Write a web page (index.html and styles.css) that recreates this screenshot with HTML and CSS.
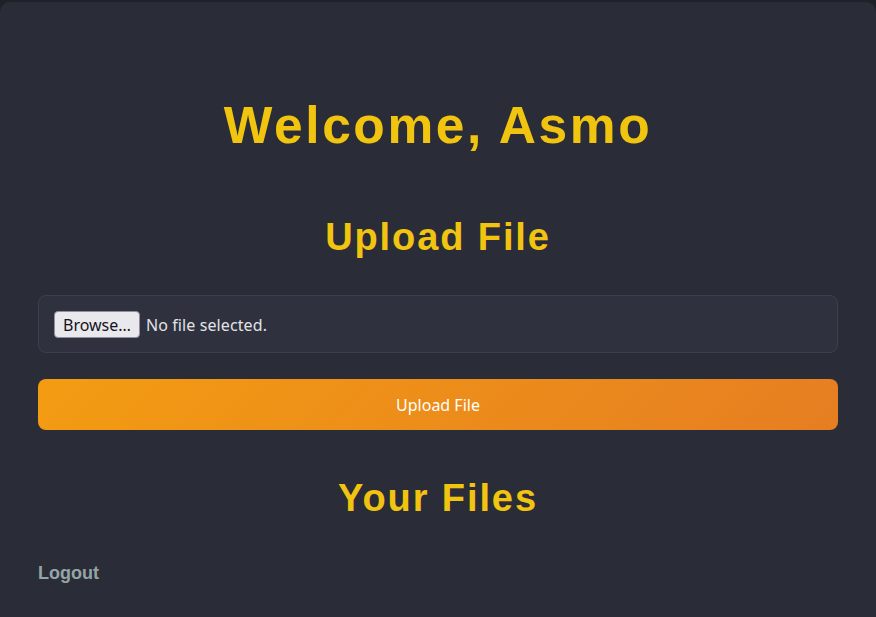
FILE: index.html
```html
<!DOCTYPE html>
<html lang="en">
<head>
<meta charset="utf-8">
<title>Dashboard</title>
<link rel="stylesheet" href="styles.css">
</head>
<body>
<main class="panel">
  <h1 class="title">Welcome, Asmo</h1>
  <h2 class="section-title section-upload">Upload File</h2>
  <form class="upload-form">
    <div class="file-box">
      <label class="file-btn" for="file">Browse…</label>
      <span class="file-status">No file selected.</span>
      <input class="file-input" id="file" type="file">
    </div>
    <button class="upload-btn" type="button">Upload File</button>
  </form>
  <h2 class="section-title section-files">Your Files</h2>
  <a class="logout" href="#">Logout</a>
</main>
</body>
</html>
```

FILE: styles.css
```css
html, body {
  margin: 0;
  padding: 0;
}
body {
  background: #1f2129;
  padding-top: 2px;
  min-height: 615px;
  font-family: "Noto Sans", "Open Sans", sans-serif;
}
.panel {
  background: #2a2d38;
  border-radius: 10px 10px 0 0;
  min-height: 615px;
  box-sizing: border-box;
  padding: 93px 38px 30px;
  display: flex;
  flex-direction: column;
}
.title {
  margin: 0;
  font-family: "Liberation Sans", Arial, sans-serif;
  font-weight: 700;
  font-size: 51.5px;
  line-height: 60px;
  letter-spacing: 0.05em;
  color: #f1c40f;
  text-align: center;
}
.section-title {
  margin: 0;
  font-family: "Liberation Sans", Arial, sans-serif;
  font-weight: 700;
  font-size: 38px;
  line-height: 44px;
  letter-spacing: 0.05em;
  color: #f1c40f;
  text-align: center;
}
.section-upload {
  margin-top: 60px;
}
.section-files {
  margin-top: 46px;
}
.upload-form {
  margin-top: 36px;
  display: flex;
  flex-direction: column;
  gap: 26px;
}
.file-box {
  display: flex;
  align-items: center;
  gap: 6px;
  background: #2f323e;
  border: 1px solid #3d404b;
  border-radius: 8px;
  padding: 15px;
  height: 26px;
}
.file-btn {
  display: inline-flex;
  align-items: center;
  height: 24px;
  padding: 1px 8px 0;
  background: #e9e9ed;
  border: 1px solid #8f8f9d;
  border-radius: 4px;
  color: #15141a;
  font-size: 16px;
  cursor: default;
}
.file-status {
  color: #e2e2e6;
  font-size: 16px;
  letter-spacing: 0.1px;
  padding-top: 1px;
}
.file-input {
  display: none;
}
.upload-btn {
  height: 51px;
  border: none;
  border-radius: 8px;
  background: linear-gradient(135deg, #f39c12 0%, #e67e22 100%);
  color: #ffffff;
  font-family: "Noto Sans", "Open Sans", sans-serif;
  font-size: 16px;
  cursor: pointer;
}
.logout {
  margin-top: 43px;
  align-self: flex-start;
  font-family: "Liberation Sans", Arial, sans-serif;
  font-weight: 700;
  font-size: 18px;
  color: #95a5a6;
  text-decoration: none;
}
```
